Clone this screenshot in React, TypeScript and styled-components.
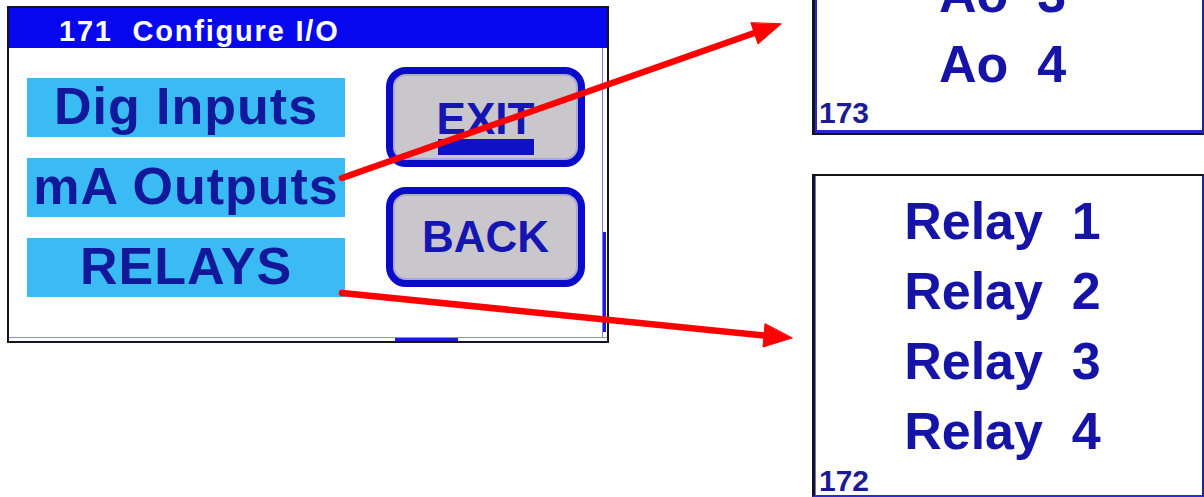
import React from 'react';
import styled, { createGlobalStyle } from 'styled-components';

const GlobalStyle = createGlobalStyle`
  html, body {
    margin: 0;
    padding: 0;
    background: #ffffff;
  }
  body {
    font-family: 'Liberation Sans', Arial, sans-serif;
  }
`;

const Page = styled.div`
  position: relative;
  width: 1204px;
  height: 497px;
  display: flex;
  justify-content: space-between;
  align-items: flex-start;
  overflow: hidden;
  background: #ffffff;
`;

const Screen = styled.div`
  margin: 6px 0 0 7px;
  width: 602px;
  height: 337px;
  box-sizing: border-box;
  border: 2px solid #161616;
  display: flex;
  flex-direction: column;
  background: #ffffff;
`;

const TitleBar = styled.div`
  height: 40px;
  box-sizing: border-box;
  padding: 7px 0 0 50px;
  background: #0707ef;
  color: #ffffff;
  font-size: 29px;
  font-weight: bold;
  line-height: 33px;
  letter-spacing: 1.8px;
  white-space: pre;
`;

const ScreenBody = styled.div`
  flex: 1;
  display: flex;
  flex-direction: column;
`;

const Main = styled.div`
  flex: 1;
  display: flex;
`;

const Content = styled.div`
  flex: 1;
  display: flex;
  align-items: flex-start;
  padding-left: 18px;
`;

const MenuList = styled.div`
  margin-top: 30px;
  display: flex;
  flex-direction: column;
  gap: 21px;
`;

const MenuItem = styled.div`
  width: 318px;
  height: 59px;
  background: #3abbf3;
  color: #11189a;
  font-size: 52px;
  font-weight: bold;
  line-height: 57px;
  letter-spacing: 1px;
  text-align: center;
  white-space: nowrap;
`;

const ButtonColumn = styled.div`
  margin: 19px 0 0 41px;
  display: flex;
  flex-direction: column;
  gap: 20px;
`;

const SoftKey = styled.div<{ $underline?: boolean }>`
  width: 199px;
  height: 100px;
  box-sizing: border-box;
  border: 7px solid #0a0acc;
  border-radius: 20px;
  background: #c9c6cc;
  box-shadow: inset 0 0 0 2px #aaa8d6;
  color: #1515b2;
  font-size: 44px;
  font-weight: bold;
  display: flex;
  flex-direction: column;
  align-items: center;
  justify-content: ${(p) => (p.$underline ? 'flex-start' : 'center')};
  padding-top: ${(p) => (p.$underline ? '23px' : '0')};
  line-height: ${(p) => (p.$underline ? '44px' : '86px')};
`;

const KeyBar = styled.div`
  width: 96px;
  height: 16px;
  margin-top: -2px;
  background: #1010c6;
`;

const ScrollTrack = styled.div`
  width: 4px;
  border-left: 1px solid #7c7cf0;
  display: flex;
  flex-direction: column;
`;

const ScrollThumb = styled.div`
  margin-top: auto;
  margin-bottom: 5px;
  height: 100px;
  width: 3px;
  background: #1a1ae0;
`;

const BottomTrack = styled.div`
  height: 3px;
  border-top: 1px solid #8a8af0;
  display: flex;
`;

const BottomThumb = styled.div`
  margin-left: 386px;
  width: 63px;
  background: #1a1ae0;
`;

const RightColumn = styled.div`
  width: 392px;
  display: flex;
  flex-direction: column;
  gap: 39px;
`;

const Display = styled.div<{ $height: number; $top?: boolean }>`
  height: ${(p) => p.$height}px;
  box-sizing: border-box;
  border-left: 3px solid #141414;
  border-right: 2px solid #23238a;
  border-top: ${(p) => (p.$top ? '2px solid #141414' : 'none')};
  border-bottom: 2px solid ${(p) => (p.$top ? '#2a2ae0' : '#141414')};
  box-shadow: ${(p) => (p.$top ? 'inset 1px 0 0 #7070e8' : 'inset 2px -3px 0 #2626dc')};
  background: #ffffff;
  display: flex;
  flex-direction: column;
  justify-content: ${(p) => (p.$top ? 'flex-start' : 'flex-end')};
  padding-top: ${(p) => (p.$top ? '10px' : '0')};
  overflow: hidden;
  color: #1614a6;
  font-weight: bold;
`;

const DisplayRow = styled.div`
  flex-shrink: 0;
  font-size: 52px;
  line-height: 70px;
  text-align: center;
  padding-right: 12px;
  white-space: pre;
`;

const PageNumber = styled.div<{ $lh: number; $pb: number }>`
  flex-shrink: 0;
  font-size: 30px;
  line-height: ${(p) => p.$lh}px;
  padding: 0 0 ${(p) => p.$pb}px 4px;
  color: #1c1c92;
`;

const Overlay = styled.svg`
  position: absolute;
  left: 0;
  top: 0;
  pointer-events: none;
`;

const aoRows = ['Ao  3', 'Ao  4'];
const relayRows = ['Relay  1', 'Relay  2', 'Relay  3', 'Relay  4'];

const App: React.FC = () => {
  return (
    <>
      <GlobalStyle />
      <Page>
        <Screen>
          <TitleBar>{'171  Configure I/O'}</TitleBar>
          <ScreenBody>
            <Main>
              <Content>
                <MenuList>
                  <MenuItem>Dig Inputs</MenuItem>
                  <MenuItem>mA Outputs</MenuItem>
                  <MenuItem>RELAYS</MenuItem>
                </MenuList>
                <ButtonColumn>
                  <SoftKey $underline>
                    EXIT
                    <KeyBar />
                  </SoftKey>
                  <SoftKey>BACK</SoftKey>
                </ButtonColumn>
              </Content>
              <ScrollTrack>
                <ScrollThumb />
              </ScrollTrack>
            </Main>
            <BottomTrack>
              <BottomThumb />
            </BottomTrack>
          </ScreenBody>
        </Screen>

        <RightColumn>
          <Display $height={135}>
            {aoRows.map((r) => (
              <DisplayRow key={r}>{r}</DisplayRow>
            ))}
            <PageNumber $lh={27} $pb={7}>173</PageNumber>
          </Display>
          <Display $height={323} $top>
            {relayRows.map((r) => (
              <DisplayRow key={r}>{r}</DisplayRow>
            ))}
            <PageNumber $lh={29} $pb={0}>172</PageNumber>
          </Display>
        </RightColumn>

        <Overlay width={1204} height={497} viewBox="0 0 1204 497">
          <g fill="#ff0000" stroke="#ff0000" strokeLinecap="round">
            <line x1={342} y1={178} x2={760} y2={31} strokeWidth={6.5} />
            <polygon points="781,24 758,44 751,23" strokeWidth={1} />
            <line x1={342} y1={293} x2={770} y2={336} strokeWidth={6.5} />
            <polygon points="792,338 763,347 765,324" strokeWidth={1} />
          </g>
        </Overlay>
      </Page>
    </>
  );
};

export default App;
